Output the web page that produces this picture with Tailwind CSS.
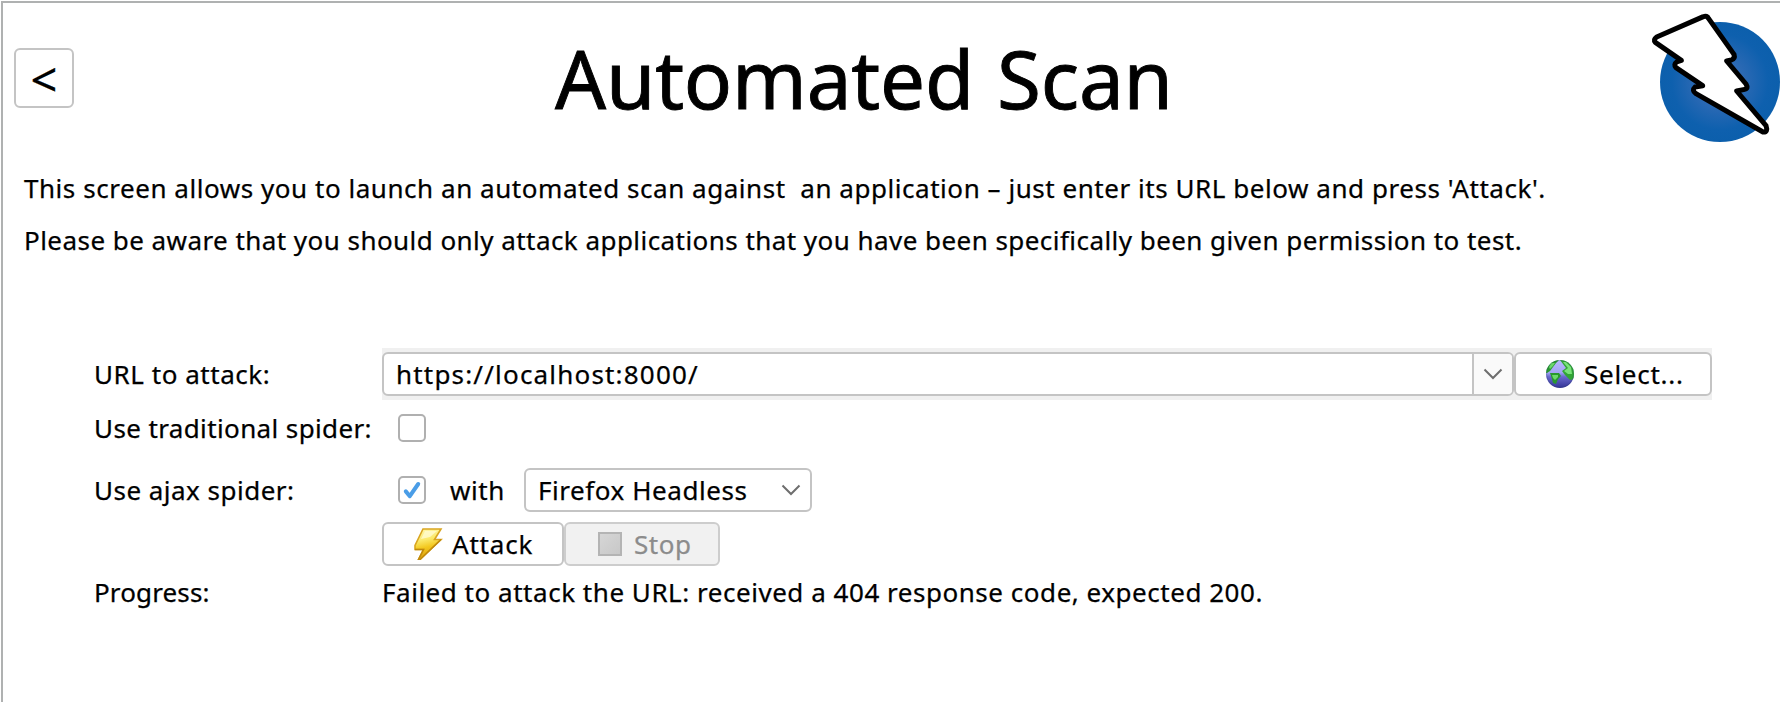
<!DOCTYPE html>
<html lang="en">
<head>
<meta charset="utf-8">
<title>Automated Scan</title>
<script src="https://cdn.jsdelivr.net/npm/@tailwindcss/browser@4"></script>
</head>
<body class="bg-white overflow-hidden">
<main class="w-[1780px] h-[702px] overflow-hidden pl-px pt-px">
<div class="w-[1790px] h-[720px] border-2 border-[#afb1b1] text-black font-['Noto_Sans',sans-serif] text-[26px] leading-8 [-webkit-text-stroke:0.25px_currentColor]">

  <header class="h-[169px] flex items-start">
    <button class="mt-[45px] ml-[11px] size-[60px] shrink-0 rounded-md border-2 border-[#c4c4c4] flex items-center justify-center text-[47px] leading-[47px] pt-[3px]">&lt;</button>
    <h1 class="ml-[481px] mt-[35px] w-[639px] whitespace-nowrap text-[80px] leading-[80px] tracking-[-0.2px] [word-spacing:2.5px] [-webkit-text-stroke:0.9px_currentColor]">Automated Scan</h1>
    <svg class="-mt-[3px] ml-[446px] w-[140px] h-[150px] shrink-0" viewBox="0 0 420 450">
      <defs><radialGradient id="disc"><stop offset="0" stop-color="#4574bc"/><stop offset=".45" stop-color="#2868b3"/><stop offset=".8" stop-color="#0e60ae"/><stop offset="1" stop-color="#0c5fac"/></radialGradient></defs>
      <circle cx="240" cy="246" r="180" fill="url(#disc)"/>
      <path d="M190 50Q201 45 206 56L282 163Q286 176 274 180L260 183L318 252Q326 266 314 268L290 273L378 377Q385 397 369 396L168 281Q154 271 165 261L188 257L108 203Q100 193 110 186L124 181L46 127Q39 119 50 111Z" fill="#fff" stroke="#000" stroke-width="15" stroke-linejoin="round"/>
    </svg>
  </header>

  <section class="pl-[21px] whitespace-pre flex flex-col gap-5"><p class="tracking-[0.545px]">This screen allows you to launch an automated scan against  an application – just enter its URL below and press 'Attack'.</p><p class="tracking-[0.45px]">Please be aware that you should only attack applications that you have been specifically been given permission to test.</p></section>

  <section class="mt-[92px] pl-[91px] flex flex-col whitespace-nowrap">
    <div class="h-[52px] flex items-center">
      <label class="w-[288px] shrink-0 tracking-[0.54px]">URL to attack:</label>
      <div class="w-[1330px] h-[52px] shrink-0 bg-[#f0f0f0] flex items-center">
        <div class="w-[1132px] h-11 rounded-md border-2 border-[#c4c4c4] bg-white flex overflow-hidden">
          <div class="flex-1 pl-3 leading-10 tracking-[1.186px]">https://localhost:8000/</div>
          <div class="w-10 border-l-2 border-[#c4c4c4] bg-[#fafafa] flex items-center justify-center">
            <svg class="w-5 h-3" viewBox="0 0 20 12" fill="none" stroke="#6e6e6e" stroke-width="2"><path d="M1.5 1.5 10 10 18.5 1.5"/></svg>
          </div>
        </div>
        <button class="w-[198px] h-11 rounded-md border-2 border-[#c4c4c4] bg-white flex items-center pl-[30px]">
          <svg class="size-7" viewBox="0 0 28 28">
            <defs><clipPath id="globe"><circle cx="14" cy="14" r="14"/></clipPath><linearGradient id="sea" x1="0" y1="0" x2="0" y2="1"><stop offset="0" stop-color="#b9b9ff"/><stop offset=".45" stop-color="#a2a4f4"/><stop offset=".6" stop-color="#6868cc"/><stop offset="1" stop-color="#333396"/></linearGradient></defs>
            <g clip-path="url(#globe)">
              <rect width="28" height="28" fill="url(#sea)"/>
              <path d="M0 13V6L6 0H13L10 3L7 7L4 11L1 13Z" fill="#28982e"/>
              <path d="M5 3H9L7 6L4 9L3 7Z" fill="#6bd86b"/>
              <path d="M4 13H13L15 16L12 19L10 24L7 23L6 19Z" fill="#28982e"/>
              <path d="M6 15H12V17L9 20L7 18Z" fill="#6bd86b"/>
              <path d="M14 0H21L28 8V19L24 20L19 15L16 11L20 8L17 4Z" fill="#32a636"/>
              <path d="M17 2H20L25 7L26 14L22 14L18 11L22 8Z" fill="#79e279"/>
              <circle cx="14" cy="14" r="13.5" fill="none" stroke="#23404a" stroke-opacity=".2"/>
            </g>
          </svg>
          <span class="ml-2.5 tracking-[0.736px]">Select...</span>
        </button>
      </div>
    </div>
    <div class="mt-1.5 h-11 flex items-center">
      <label class="w-[304px] tracking-[0.38px]">Use traditional spider:</label>
      <span class="size-7 rounded-[5px] border-2 border-[#b0b0b0] bg-white"></span>
    </div>
    <div class="mt-[18px] h-11 flex items-center">
      <label class="w-[304px] tracking-[0.479px]">Use ajax spider:</label>
      <span class="size-7 rounded-[5px] border-2 border-[#b0b0b0] bg-white flex items-center justify-center">
        <svg class="size-6" viewBox="0 0 24 24" fill="none" stroke="#4a9de7" stroke-width="4" stroke-linecap="round" stroke-linejoin="round"><path d="M5.8 13.4 9.8 18.2 18.2 6"/></svg>
      </span>
      <span class="ml-6 w-[74px] tracking-[0.6px]">with</span>
      <div class="w-[288px] h-11 rounded-md border-2 border-[#c4c4c4] bg-white flex items-center pl-3 pr-[9px] justify-between">
        <span class="tracking-[0.56px]">Firefox Headless</span>
        <svg class="w-5 h-3" viewBox="0 0 20 12" fill="none" stroke="#6e6e6e" stroke-width="2"><path d="M1.5 1.5 10 10 18.5 1.5"/></svg>
      </div>
    </div>
    <div class="mt-2.5 h-11 ml-[288px] flex">
      <button class="w-[182px] h-11 rounded-md border-2 border-[#c4c4c4] bg-white flex items-center pl-[29px]">
        <svg class="w-8 h-8" viewBox="0 0 32 32">
          <defs><linearGradient id="bolt" x1=".3" y1="0" x2=".5" y2="1"><stop offset="0" stop-color="#fff6a8"/><stop offset=".35" stop-color="#fbe96a"/><stop offset=".6" stop-color="#f3c81e"/><stop offset="1" stop-color="#d79a08"/></linearGradient></defs>
          <path d="M10 1H28L21.5 11.5H28L7 31.5H5.5L10.5 21.5H2V17.5Z" fill="url(#bolt)" stroke="#d9a520" stroke-width="1.6"/>
          <path d="M12 3H24L17 9L8 11Z" fill="#fffbd0" fill-opacity=".8"/>
          <path d="M28 11.5 7 31.5H5.5L10.5 21.5H2" fill="none" stroke="#c08a0c" stroke-width="1.5"/>
        </svg>
        <span class="ml-[7px] tracking-[0.81px]">Attack</span>
      </button>
      <button class="w-[156px] h-11 rounded-md border-2 border-[#cdcdcd] bg-[#f1f1f1] text-[#8c8c8c] flex items-center pl-8">
        <span class="size-6 border-2 border-[#b4b4b4] bg-linear-to-br from-[#d6d6d6] to-[#c8c8c8]"></span>
        <span class="ml-3 tracking-[0.537px]">Stop</span>
      </button>
    </div>
    <div class="mt-2.5 flex">
      <label class="w-[288px] tracking-[0.13px]">Progress:</label>
      <span class="tracking-[0.53px]">Failed to attack the URL: received a 404 response code, expected 200.</span>
    </div>
  </section>
</div>
</main>
</body>
</html>
